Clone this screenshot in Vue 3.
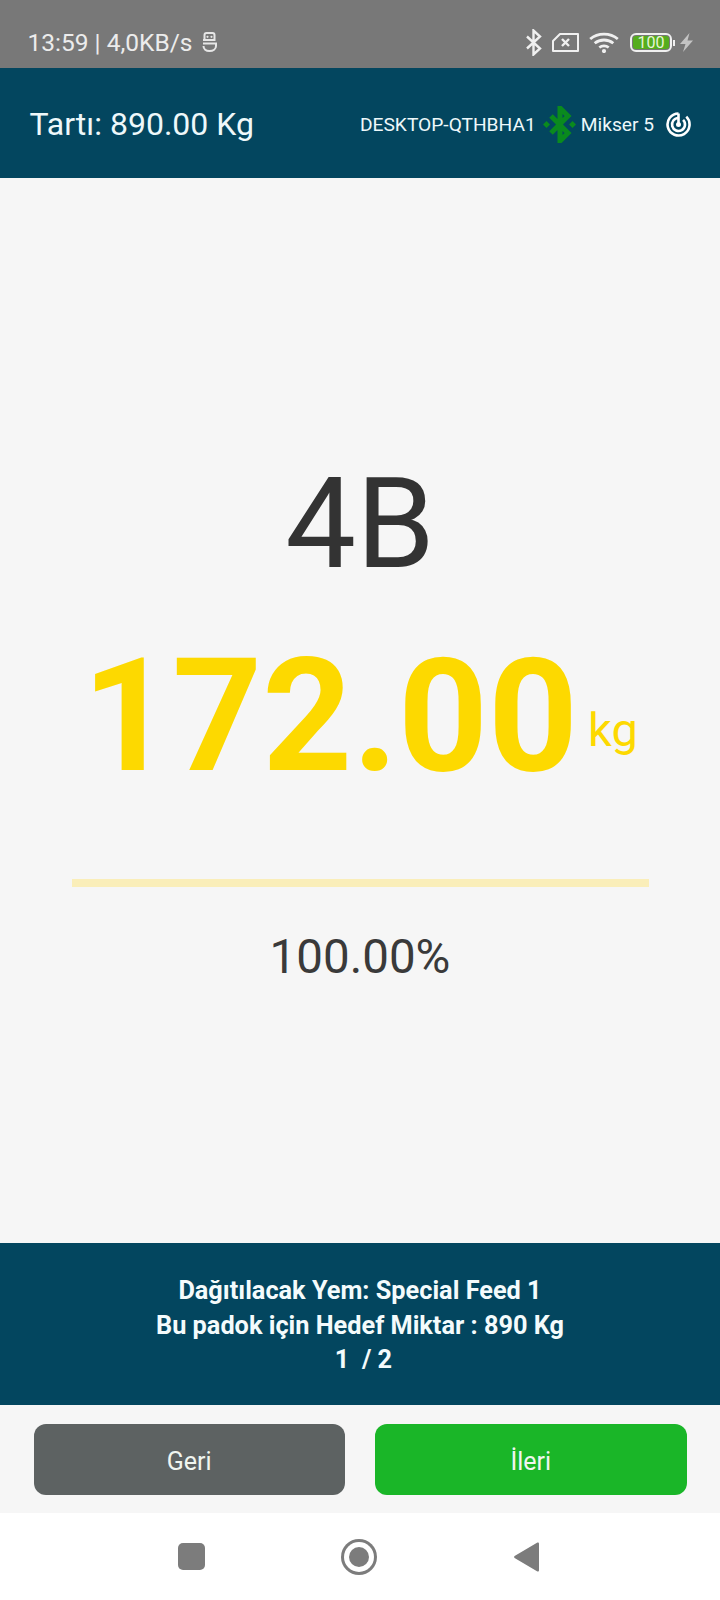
<template>
  <div class="screen">
    <div class="status">
      <div class="status-left">
        <span>13:59 | 4,0KB/s</span>
        <svg class="mask" width="15" height="20" viewBox="0 0 15 20" fill="none" stroke="#e6e6e6" stroke-width="2">
          <path d="M2.500 8V3c0-1.200 1-2 2-2h6c1 0 2 .8 2 2v5H1" />
          <path d="M1 11.500h13V14c0 3-2.900 5-6.500 5s-6-2-6-5" />
          <circle cx="5.500" cy="4.800" r="1.100" fill="#e6e6e6" stroke="none" />
          <circle cx="9.500" cy="4.800" r="1.100" fill="#e6e6e6" stroke="none" />
        </svg>
      </div>
      <div class="status-right">
        <svg width="16" height="27" viewBox="0 0 16 27" fill="none" stroke="#f0f0f0" stroke-width="2.400">
          <path d="M1 7.500l13 12-6.500 6V1.500l6.500 6-13 12" />
        </svg>
        <svg class="sim" width="27" height="19" viewBox="0 0 27 19" fill="none" stroke="#f0f0f0" stroke-width="2">
          <path d="M8 1h18v17H1V8z" stroke-linejoin="round" />
          <path d="M10 6l7 7M17 6l-7 7" stroke-width="2.400" />
        </svg>
        <svg class="wifi" width="30" height="21" viewBox="0 0 30 21" fill="none" stroke="#f0f0f0" stroke-width="2.800">
          <path d="M1.200 7C8.800.4 21.200.4 28.800 7" />
          <path d="M5.700 11.300c5.200-4.400 13.400-4.400 18.600 0" />
          <path d="M10.300 15.500c2.700-2 6.700-2 9.400 0" />
          <circle cx="15" cy="19" r="2.100" fill="#f0f0f0" stroke="none" />
        </svg>
        <div class="battery"><b>100</b></div>
        <i class="nub"></i>
        <svg class="bolt" width="13" height="19" viewBox="0 0 13 19">
          <path d="M9.500 0L0 11h5.500L3 19l10-11.500H7.500z" fill="#c4c4c4" />
        </svg>
      </div>
    </div>

    <header class="header">
      <span class="scale">Tartı: 890.00 Kg</span>
      <div class="device">
        <span>DESKTOP-QTHBHA1</span>
        <svg class="bt" width="33" height="37" viewBox="0 0 33 37" fill="none" stroke="#0a8a1e" stroke-width="5">
          <path d="M8 10l17 17-8 8V2l8 8L8 27" />
          <path d="M0 18.500l3.500-3.500 3.500 3.500-3.500 3.500zM26 18.500l3.500-3.500 3.500 3.500-3.500 3.500z" fill="#0a8a1e" stroke="none" />
        </svg>
        <span>Mikser 5</span>
        <svg class="radar" width="25" height="25" viewBox="0 0 25 25" fill="none" stroke="#fff" stroke-width="2.600">
          <path d="M12.500 1.500A11 11 0 1 0 20.300 4.700" />
          <path d="M12.500 6A6.500 6.500 0 1 0 17.100 7.900" />
          <path d="M12.500 1.500v11" />
          <circle cx="12.500" cy="12.500" r="2.500" fill="#fff" stroke="none" />
        </svg>
      </div>
    </header>

    <main class="main">
      <div class="code">4B</div>
      <div class="amount">
        <span class="value">172.00</span>
        <span class="unit">kg</span>
      </div>
      <div class="bar"></div>
      <div class="percent">100.00%</div>
    </main>

    <section class="info">
      <div>Dağıtılacak Yem: Special Feed 1</div>
      <div>Bu padok için Hedef Miktar : 890 Kg</div>
      <div class="count">1&nbsp; / 2</div>
    </section>

    <div class="actions">
      <button class="back">Geri</button>
      <button class="next">İleri</button>
    </div>

    <nav class="nav">
      <i class="square"></i>
      <i class="home"></i>
      <svg class="tri" width="25" height="30" viewBox="0 0 25 30">
        <path d="M23 .8c1-.7 2-.2 2 1v26.400c0 1.200-1 1.700-2 1L1 16.200c-1.200-.7-1.200-1.700 0-2.400z" fill="#7c7c7c" />
      </svg>
    </nav>
  </div>
</template>

<script setup>
</script>

<style>
html, body { margin: 0; background: #f6f6f6; }
</style>

<style scoped>
.screen { width: 720px; height: 1600px; display: flex; flex-direction: column; font-family: Roboto, "Liberation Sans", sans-serif; background: #f6f6f6; overflow: hidden; }

.status { height: 68px; background: #787878; color: #ececec; display: flex; justify-content: space-between; align-items: center; padding: 17px 27px 0 27.500px; box-sizing: border-box; font-size: 24.500px; }
.status-left { display: flex; align-items: center; gap: 10px; }
.mask { margin-top: -2px; }
.status-right { display: flex; align-items: center; }
.sim { margin-left: 10px; }
.wifi { margin-left: 10px; }
.battery { margin-left: 11px; width: 42px; height: 19px; border: 2px solid #f0f0f0; border-radius: 6px; box-sizing: border-box; padding: 1px; display: flex; }
.battery b { flex: 1; background: #55ad1e; border-radius: 3px; color: #e8f5d8; font-size: 16px; font-weight: 400; line-height: 13px; text-align: center; }
.nub { width: 2px; height: 6px; margin-left: 1px; background: #f0f0f0; }
.bolt { margin-left: 5px; }

.header { height: 110px; background: #03465f; color: #eef8fa; display: flex; justify-content: space-between; align-items: center; padding: 2px 29px 0 29.500px; box-sizing: border-box; }
.scale { font-size: 32px; }
.device { display: flex; align-items: center; font-size: 19.200px; }
.bt { margin: 0 5px 0 7px; }
.radar { margin-left: 12px; }

.main { flex: 1; display: flex; flex-direction: column; align-items: center; color: #333; padding-top: 276px; }
.code { font-size: 126px; line-height: 140px; }
.amount { display: flex; align-items: center; margin-top: 32px; color: #fdd900; height: 180px; }
.value { font-size: 157px; font-weight: 700; line-height: 180px; }
.unit { font-size: 47px; margin: 0 0 0 10px; position: relative; top: 13px; }
.bar { width: 577px; height: 8px; background: #faeeb9; margin-top: 73px; }
.percent { font-size: 47.500px; line-height: 56px; margin-top: 42px; color: #3a3a3a; }

.info { height: 162px; box-sizing: border-box; background: #03465f; color: #f4fbfc; padding-top: 31px; text-align: center; font-size: 25.300px; font-weight: 700; line-height: 34.500px; }
.count { padding-left: 7px; }

.actions { height: 108px; box-sizing: border-box; padding: 19px 33.500px 18px; display: flex; gap: 30px; }
.actions button { flex: 1; border: 0; border-radius: 12px; color: #f0f5f0; font-family: inherit; font-size: 25px; padding: 3px 0 0; }
.back { background: #5d6262; }
.next { background: #1ab628; }

.nav { height: 87px; background: #fff; display: flex; justify-content: center; align-items: center; box-sizing: border-box; padding-right: 3px; }
.square { width: 27px; height: 27px; border-radius: 5px; background: #7c7c7c; }
.home { width: 20px; height: 20px; border-radius: 50%; background: #7c7c7c; margin-left: 144px; box-shadow: 0 0 0 5px #fff, 0 0 0 8px #7c7c7c; }
.tri { margin-left: 145px; }
</style>
